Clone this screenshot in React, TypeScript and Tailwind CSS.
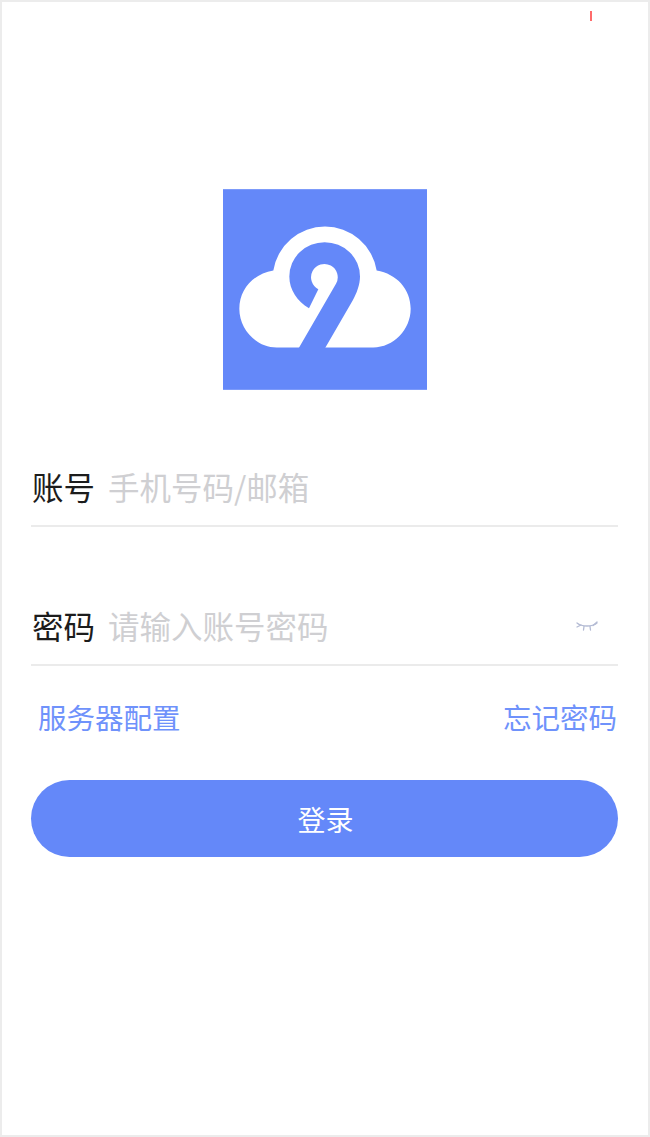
const cjk = "font-['Noto_Sans_CJK_SC','Noto_Sans',sans-serif]";

function Logo() {
  return (
    <svg width="204" height="201" viewBox="39 28 612 602" className="block">
      <rect x="39" y="28" width="612" height="602" fill="#6488f9" />
      <path
        d="M190 272 A157 157 0 0 1 500 272 C560 282 602 328 602 387 C602 450 550 503 490 503 L200 503 C140 503 88 450 88 387 C88 328 130 282 190 272 Z"
        fill="#fff"
      />
      <path
        d="M297 385 C262 365 238 330 238 290 A106 103 0 0 1 450 290 C450 315 440 340 428 362 L345 505 L266 505 L378 312 A40 40 0 1 0 325 328 Z"
        fill="#6488f9"
      />
    </svg>
  );
}

function ClosedEye() {
  return (
    <svg width="22" height="12" viewBox="0 0 22 12" fill="none" stroke="#b4bbd4" strokeWidth="1.3" strokeLinecap="round">
      <path d="M1 2C6 6 16 6 21 2" />
      <path d="M1 6L5 4M21 1L17 4.5M8 5.5L7.5 9M14 5.5L14.5 9" />
    </svg>
  );
}

function Field({ label, hint, right }: { label: string; hint: string; right?: React.ReactNode }) {
  return (
    <div className="flex h-[77px] items-center border-b-2 border-[#ebebeb] pl-px">
      <span className="w-[76px] shrink-0 -translate-y-px text-[31.5px] text-[#1c1c1c]">{label}</span>
      <span className="-translate-y-px text-[31.5px] text-[#cfcfd2]">{hint}</span>
      {right && <span className="ml-auto mr-[20px]">{right}</span>}
    </div>
  );
}

export default function App() {
  return (
    <div className={`relative h-[1137px] w-[650px] border-2 border-[#ececec] bg-white ${cjk}`}>
      {/* red speck at the top of the capture */}
      <div className="absolute left-[588px] top-[9px] h-[10px] w-[2px] bg-[#ff6b6b]" />

      <div className="flex justify-center pt-[187px]">
        <Logo />
      </div>

      <div className="ml-[29px] mr-[30px] mt-[60px]">
        <Field label="账号" hint="手机号码/邮箱" />
        <div className="mt-[62px]">
          <Field label="密码" hint="请输入账号密码" right={<ClosedEye />} />
        </div>

        <div className="mt-[31px] flex items-center justify-between pl-[7px] pr-px text-[28.5px] leading-[40px] text-[#6f92fb]">
          <span>服务器配置</span>
          <span>忘记密码</span>
        </div>

        <button className="mt-[43px] flex h-[77px] w-full items-center justify-center rounded-[39px] bg-[#6488f9] pl-[2px] text-[28px] text-white">
          登录
        </button>
      </div>
    </div>
  );
}
